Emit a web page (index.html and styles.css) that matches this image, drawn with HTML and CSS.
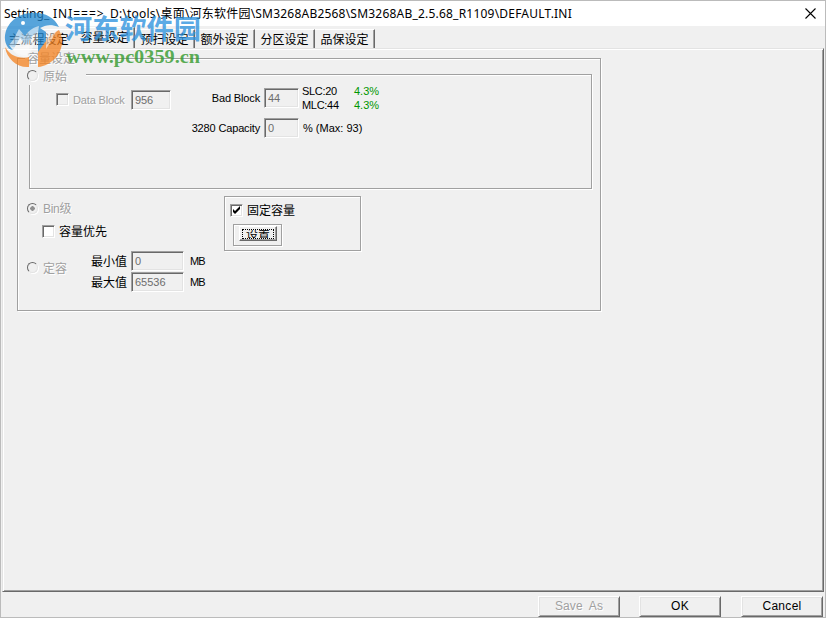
FILE: index.html
```html
<!DOCTYPE html>
<html lang="zh-CN">
<head>
    <meta charset="UTF-8">
    <title>Setting INI</title>
    <link rel="stylesheet" href="styles.css">
</head>
<body>
    <div class="window">
        <header class="titlebar">
            <div class="title">
                <span class="seg-name">Setting_</span>
                <span class="seg-ini">INI===&gt;</span>
                <span class="seg-path">D:\tools\桌面\河东软件园\SM3268AB2568\SM3268AB_2.5.68_R1109\DEFAULT.INI</span>
            </div>
            <svg class="close" width="11" height="11" viewBox="0 0 11 11"><path d="M.5 .5l10 10M10.5 .5l-10 10" stroke="#000" stroke-width="1.1"/></svg>
        </header>

        <nav class="tabs">
            <div class="tab tab-main">主流程设定</div>
            <div class="tab active">容量设定</div>
            <div class="tab">预扫设定</div>
            <div class="tab">额外设定</div>
            <div class="tab">分区设定</div>
            <div class="tab">品保设定</div>
        </nav>

        <main class="page">
            <section class="group capacity">
                <div class="legend disabled">容量设定</div>

                <div class="group original">
                    <div class="radio-row original-title disabled"><i class="radio"></i><span class="cn">原始</span></div>
                    <div class="original-body">
                        <div class="data-block">
                            <i class="check grey"></i>
                            <span class="disabled data-label">Data Block</span>
                            <span class="input w40">956</span>
                        </div>
                        <div class="blocks">
                            <span class="right">Bad Block</span>
                            <span class="input">44</span>
                            <div class="rates">
                                <span>SLC:20</span><span class="green">4.3%</span>
                                <span>MLC:44</span><span class="green">4.3%</span>
                            </div>
                            <span class="right">3280 Capacity</span>
                            <span class="input">0</span>
                            <span class="max">% (Max: 93)</span>
                        </div>
                    </div>
                </div>

                <div class="lower">
                    <div class="modes">
                        <div class="radio-row bin disabled"><i class="radio on"></i><span class="cn">Bin级</span></div>
                        <div class="check-row first"><i class="check"></i><span class="cn">容量优先</span></div>
                        <div class="fixed-row">
                            <div class="radio-row disabled"><i class="radio"></i><span class="cn">定容</span></div>
                            <div class="sizes">
                                <span class="cn">最小值</span><span class="input">0</span><span class="mb">MB</span>
                                <span class="cn">最大值</span><span class="input">65536</span><span class="mb">MB</span>
                            </div>
                        </div>
                    </div>
                    <div class="group fixed-box">
                        <div class="check-row">
                            <i class="check"><svg width="9" height="9" viewBox="0 0 9 9"><path d="M1 3v3l2 2 5-5v-3l-5 5z"/></svg></i><span class="cn">固定容量</span>
                        </div>
                        <div class="group set-frame"><button class="set"><span>设置</span></button></div>
                    </div>
                </div>
            </section>
        </main>

        <footer class="buttons">
            <button class="btn save disabled">Save&nbsp; As</button>
            <button class="btn">OK</button>
            <button class="btn cancel">Cancel</button>
        </footer>

        <div class="watermark">
            <svg width="210" height="62" viewBox="0 0 210 62">
                <g class="wm-logo">
                    <!-- blue upper arc -->
                    <path fill="#1f86d0" d="M5 31C4 16 16 5 31 4c13-1 23 4 28 14-8-3-14-2-19 1l6 4v21l-8 4V23c-6 3-8 8-12 13l-6-7-7 12c-4 0-7-4-8-10z"/>
                    <path fill="#fff" fill-opacity=".6" d="M13 31l6-11 6 7c4-6 9-9 14-10l-2 13-8 16c-8 1-15-3-20-10z"/>
                    <circle fill="#fff" cx="23" cy="14" r="2"/>
                    <!-- orange lower arc -->
                    <path fill="#f5821f" d="M5 38c4 6 8 9 13 10 4 1 8 1 11 0v10C17 59 7 50 5 38zM38 58V43c6-8 11-17 21-22 9 16-3 35-21 37z"/>
                    <path fill="#fff" fill-opacity=".6" d="M10 37c7 3 13 2 19-2v13c-8 1-14-2-19-11zM46 23c4-2 8-3 12-3-5 7-7 13-12 20z"/>
                </g>
                <text class="wm-name" x="65" y="30" textLength="136" lengthAdjust="spacingAndGlyphs">河东软件园</text>
                <text class="wm-url" x="66" y="54" textLength="134" lengthAdjust="spacingAndGlyphs">www.pc0359.cn</text>
            </svg>
        </div>
    </div>
</body>
</html>
```
FILE: styles.css
```css
* {
    box-sizing: border-box;
}
body {
    margin: 0;
    font: 11px/14px "Liberation Sans", "Noto Sans CJK SC", sans-serif;
    color: #000;
}
i {
    font-style: normal;
}
.window {
    position: relative;
    display: flex;
    flex-direction: column;
    width: 826px;
    height: 618px;
    border: 1px solid #bbb;
    background: #f0f0f0;
    overflow: hidden;
}
.titlebar {
    display: flex;
    align-items: center;
    justify-content: space-between;
    height: 25px;
    padding: 0 9px 0 3px;
    background: #fff;
    font: 12px/24px "Noto Sans", "Noto Sans CJK SC", sans-serif;
}
.title {
    display: flex;
    white-space: nowrap;
}
.seg-name {
    width: 49px;
}
.seg-ini {
    width: 57px;
    letter-spacing: 1px;
}
.seg-path {
    letter-spacing: .21px;
}
.tabs {
    display: flex;
    align-items: flex-end;
    height: 22px;
    padding-left: 1px;
    font-size: 12px;
}
.tab {
    width: 60px;
    height: 19px;
    border-top: 1px solid #fff;
    border-right: 1px solid #696969;
    box-shadow: inset -1px 0 #a0a0a0;
    text-align: center;
    line-height: 20px;
    white-space: nowrap;
}
.tab-main {
    width: 73px;
    border-right: 0;
    box-shadow: none;
}
.tab.active {
    width: 60px;
    height: 21px;
    line-height: 21px;
}
.page {
    height: 544px;
    margin: 0 1px;
    border: 1px solid #e3e3e3;
    border-right-color: #696969;
    border-bottom-color: #696969;
    box-shadow: inset 1px 1px #fff, inset -1px -1px #a0a0a0;
    padding: 9px 0 0 14px;
}
.group {
    border: 1px solid #a0a0a0;
    box-shadow: 1px 1px #fff, inset 1px 1px #fff;
}
.disabled {
    color: #a0a0a0;
    text-shadow: 1px 1px #fff;
}
.capacity {
    width: 584px;
    height: 253px;
}
.legend {
    width: 52px;
    height: 14px;
    margin: -8px 0 0 7px;
    padding-left: 2px;
    background: #f0f0f0;
    font-size: 12px;
    line-height: 16px;
    white-space: nowrap;
}
.original {
    width: 563px;
    height: 115px;
    margin: 9px 0 0 11px;
}
.radio-row,
.check-row {
    display: flex;
    align-items: center;
    height: 14px;
    font-size: 12px;
    white-space: nowrap;
}
.radio-row {
    gap: 5px;
}
.original-title {
    width: 59px;
    height: 19px;
    margin: -9px 0 0 -3px;
    background: #f0f0f0;
}
.radio {
    flex: none;
    width: 11px;
    height: 11px;
    border: 1.5px solid;
    border-color: #696969 #e3e3e3 #e3e3e3 #696969;
    border-radius: 50%;
    box-shadow: 1px 1px #fff;
}
.radio.on {
    background: radial-gradient(circle, #909090 2px, transparent 2.5px);
}
.check {
    flex: none;
    width: 13px;
    height: 13px;
    border: 1px solid;
    border-color: #a0a0a0 #fff #fff #a0a0a0;
    box-shadow: inset 1px 1px #696969, inset -1px -1px #e3e3e3;
    background: #fff;
}
.check svg {
    display: block;
    margin: 1px 0 0 1px;
}
.check.grey {
    background: #f0f0f0;
}
.input {
    display: block;
    height: 20px;
    padding-left: 3px;
    border: 1px solid;
    border-color: #a0a0a0 #fff #fff #a0a0a0;
    box-shadow: inset 1px 1px #696969, inset -1px -1px #e3e3e3;
    color: #6d6d6d;
    line-height: 19px;
}
.w40 {
    width: 40px;
}
.original-body {
    display: flex;
    letter-spacing: -.15px;
}
.data-block {
    display: flex;
    align-items: center;
    width: 150px;
    height: 20px;
    margin-top: 5px;
    padding-left: 26px;
}
.data-block .check {
    margin-top: -2px;
}
.data-label {
    width: 58px;
    margin-left: 4px;
}
.blocks {
    display: grid;
    grid-template-columns: 80px 35px auto;
    grid-auto-rows: 20px;
    gap: 10px 4px;
    align-items: center;
    margin-top: 3px;
}
.right {
    text-align: right;
}
.rates {
    display: grid;
    grid-template-columns: 52px 30px;
    margin-left: -1px;
    letter-spacing: -.3px;
}
.green {
    color: #009600;
    letter-spacing: 0;
}
.max {
    letter-spacing: 0;
}
.lower {
    display: flex;
}
.modes {
    width: 206px;
    padding: 12px 0 0 9px;
}
.bin {
    letter-spacing: -.3px;
}
.check-row {
    gap: 4px;
}
.check-row.first {
    margin: 9px 0 0 15px;
}
.fixed-row {
    display: flex;
    align-items: center;
    margin-top: 13px;
}
.fixed-row .radio-row {
    width: 64px;
    margin-top: -8px;
}
.sizes {
    display: grid;
    grid-template-columns: 36px 53px auto;
    gap: 1px 4px;
    align-items: center;
}
.sizes .mb {
    padding-left: 2px;
    letter-spacing: -.8px;
}
.cn {
    padding-top: 2px;
    font-size: 12px;
}
.fixed-box {
    width: 137px;
    height: 55px;
    margin-top: 7px;
    padding: 6px 0 0 5px;
}
.set-frame {
    width: 49px;
    height: 22px;
    margin: 7px 0 0 3px;
    padding: 1px 0 0 5px;
}
.set {
    display: block;
    width: 38px;
    height: 15px;
    padding: 1px 2px;
    border: 1px solid;
    border-color: #fff #696969 #696969 #fff;
    box-shadow: inset -1px -1px #a0a0a0;
    background: #f0f0f0;
}
.set span {
    display: block;
    height: 10px;
    border: 1px dotted #000;
    font: 12px/8px "Noto Sans CJK SC", sans-serif;
    overflow: hidden;
}
.buttons {
    display: flex;
    justify-content: flex-end;
    gap: 20px;
    padding: 4px 2px 0 0;
}
.btn {
    width: 82px;
    height: 21px;
    padding: 0 0 2px;
    border: 1px solid;
    border-color: #fff #696969 #696969 #fff;
    box-shadow: inset 1px 1px #e3e3e3, inset -1px -1px #a0a0a0;
    background: #f0f0f0;
    font: 12px/16px "Liberation Sans", sans-serif;
    letter-spacing: .3px;
}
.btn.save {
    margin-right: -1px;
    letter-spacing: .1px;
}
.watermark {
    position: absolute;
    left: -1px;
    top: 8px;
}
.watermark svg {
    display: block;
}
.wm-logo {
    opacity: .75;
}
.wm-name {
    font: bold 27px "Noto Sans CJK SC", sans-serif;
    fill: #2f93de;
    fill-opacity: .8;
}
.wm-url {
    font: bold 18px "Liberation Serif", serif;
    fill: #30992a;
    fill-opacity: .8;
}
```
